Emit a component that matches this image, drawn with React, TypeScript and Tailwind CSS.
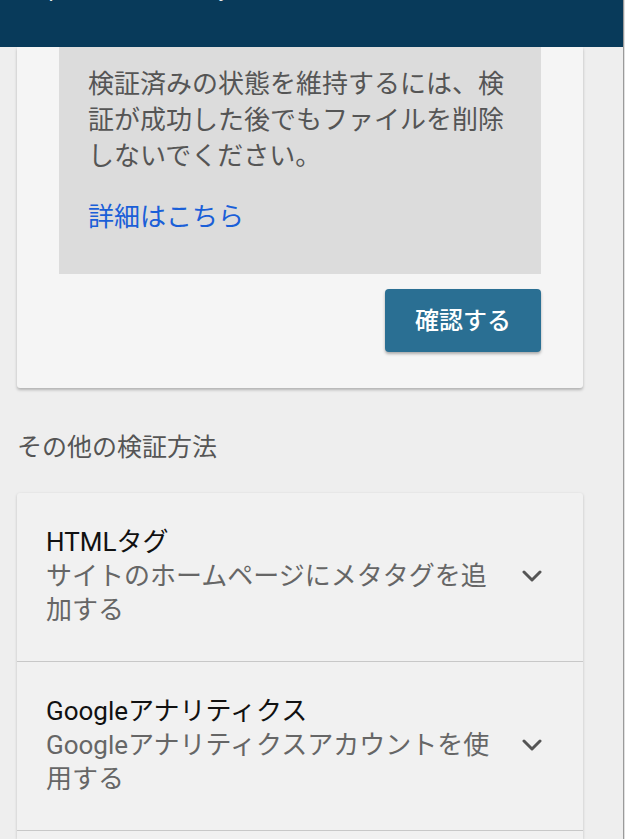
import React from 'react';

const font = { fontFamily: 'Roboto, "Noto Sans CJK JP", sans-serif' };

// Other verification methods listed under the main card
const methods = [
  { title: 'HTMLタグ', desc: 'サイトのホームページにメタタグを追加する' },
  { title: 'Googleアナリティクス', desc: 'Googleアナリティクスアカウントを使用する' },
];

function Chevron() {
  return (
    <svg className="w-[20px] h-[12px] shrink-0" viewBox="0 0 20 12" fill="none" stroke="#555555" strokeWidth="3" strokeLinecap="round" strokeLinejoin="round">
      <polyline points="2,2 10,10 18,2" />
    </svg>
  );
}

export default function App() {
  return (
    <div className="w-[625px] h-[839px] overflow-hidden bg-[#eeeeee] flex" style={font}>
      <div className="w-[623px] flex flex-col">
        {/* header bar, url text scrolled mostly out of view */}
        <div className="h-[47px] shrink-0 bg-[#083a5a] overflow-hidden pl-[22px]">
          <div className="-mt-[23px] text-[22px] leading-[24px] text-white/90 whitespace-nowrap">https://www.hellocity.com/</div>
        </div>

        {/* current method card */}
        <div className="ml-[17px] w-[566px] bg-[#f5f5f5] rounded-b-[3px] shadow-[0_2px_3px_rgba(0,0,0,0.25)] pb-[36px]">
          <div className="ml-[42px] w-[482px] bg-[#dcdcdc] pt-[19px] pb-[39px] px-[29px]">
            <p className="text-[26px] leading-[36px] text-[#555555]">
              検証済みの状態を維持するには、検証が成功した後でもファイルを削除しないでください。
            </p>
            <a className="block mt-[25px] text-[26px] leading-[36px] text-[#1a5fd8]">詳細はこちら</a>
          </div>
          <div className="flex justify-end w-[524px] mt-[15px]">
            <button className="w-[156px] h-[63px] rounded-[4px] bg-[#2a6f93] text-white text-[24px] font-medium shadow-[0_2px_3px_rgba(0,0,0,0.3)]">
              確認する
            </button>
          </div>
        </div>

        <h2 className="ml-[17px] mt-[42px] mb-[27px] text-[25px] leading-[36px] text-[#555555]">その他の検証方法</h2>

        <div className="ml-[17px] w-[566px] flex-1 bg-[#f1f1f1] shadow-[0_1px_3px_rgba(0,0,0,0.2)] rounded-t-[3px]">
          {methods.map((m, i) => (
            <div key={m.title} className={`flex items-center pl-[29px] pt-[32px] pb-[34px] ${i > 0 ? 'border-t border-[#c8c8c8]' : ''}`}>
              <div className="w-[450px] text-[26px] leading-[34px]">
                <div className="text-[#111111]">{m.title}</div>
                <div className="text-[#666666]">{m.desc}</div>
              </div>
              <div className="ml-[26px]">
                <Chevron />
              </div>
            </div>
          ))}
          <div className="border-t border-[#c8c8c8]" />
        </div>
      </div>
      <div className="w-px h-full bg-[#9a9a9a]" />
      <div className="w-px h-full bg-[#e0e0e0]" />
    </div>
  );
}
